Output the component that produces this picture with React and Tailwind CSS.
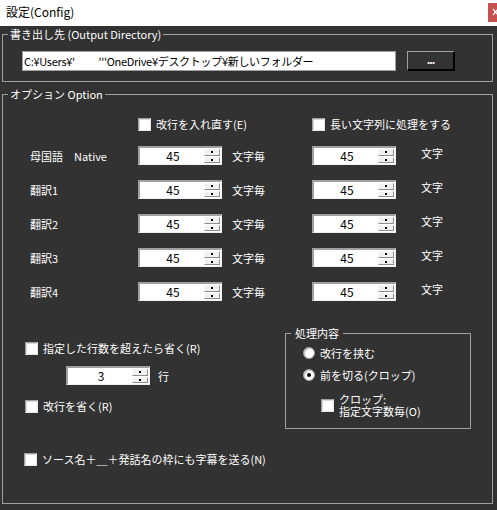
import React from "react";

// 設定ダイアログ（ダーク）
function CheckBox() {
  return (
    <span className="inline-block w-[13px] h-[13px] shrink-0 bg-white border border-[#a0a0a0] border-r-[#e8e8e8] border-b-[#e8e8e8] shadow-[inset_1px_1px_0_#d8d8d8]" />
  );
}

function Radio({ checked }) {
  return (
    <span className="flex items-center justify-center w-[12px] h-[12px] shrink-0 rounded-full bg-white border border-[#a0a0a0] shadow-[inset_1px_1px_0_#c8c8c8]">
      {checked && <span className="w-[4px] h-[4px] rounded-full bg-black" />}
    </span>
  );
}

function SpinBtn() {
  return (
    <div className="flex-1 flex items-center justify-center bg-[#f0f0f0] border border-[#f8f8f8] border-r-[#8c8c8c] border-b-[#8c8c8c]">
      <span className="w-[2px] h-[2px] bg-black" />
    </div>
  );
}

function Spin({ value }) {
  return (
    <div className="flex h-[19px] w-[84px] shrink-0 bg-white border-t-2 border-l-2 border-r border-b border-t-[#a0a0a0] border-l-[#a0a0a0] border-r-[#f0f0f0] border-b-[#f0f0f0]">
      <div className="flex-1 text-center text-black text-[12px] leading-[16px] pl-[2px]">
        {value}
      </div>
      <div className="flex flex-col w-[16px] my-[1px] mr-[1px] gap-[1px]">
        <SpinBtn />
        <SpinBtn />
      </div>
    </div>
  );
}

const rows = ["母国語\u3000Native", "翻訳1", "翻訳2", "翻訳3", "翻訳4"];

export default function App() {
  return (
    <div className="w-[497px] h-[510px] bg-[#323232] text-white text-[11px] leading-[14px] font-['Noto_Sans_CJK_JP','Noto_Sans',sans-serif] flex flex-col overflow-hidden">
      {/* タイトルバー */}
      <div className="h-[26px] bg-white flex items-start justify-between shrink-0">
        <span className="text-black text-[12px] leading-[14px] ml-[6px] mt-[5px]">設定(Config)</span>
        <span className="flex items-center w-[9px] h-[19px] mt-[3px] bg-[#c75050] overflow-hidden">
          <svg width="9" height="19" viewBox="0 0 9 19">
            <path d="M5 6 L10 12 M5 12 L10 6" stroke="white" strokeWidth="1.2" fill="none" />
          </svg>
        </span>
      </div>

      {/* 書き出し先 */}
      <fieldset className="mt-[1px] ml-[2px] mr-[4px] border border-[#a0a0a0] px-0 pb-[10px]">
        <legend className="ml-[5px] px-[2px] leading-[14px]">書き出し先 (Output Directory)</legend>
        <div className="flex items-center mt-[10px]">
          <div className="ml-[19px] w-[374px] h-[20px] bg-white border border-[#a0a0a0] text-black text-[11px] tracking-[-0.3px] leading-[18px] pl-[1px] whitespace-nowrap overflow-hidden">
            C:¥Users¥'　　 '''OneDrive¥デスクトップ¥新しいフォルダー
          </div>
          <button className="ml-[11px] w-[48px] h-[20px] bg-[#333333] border border-t-[#a0a0a0] border-l-[#a0a0a0] border-r-2 border-b-2 border-r-black border-b-black text-white font-bold text-[11px] leading-[12px] pb-[3px] tracking-[-1px]">
            ...
          </button>
        </div>
      </fieldset>

      {/* オプション */}
      <fieldset className="mt-[5px] ml-[2px] mr-[4px] border border-[#a0a0a0] px-0 pb-[37px]">
        <legend className="ml-[5px] px-[2px] leading-[14px]">オプション Option</legend>

        <div className="flex items-center h-[14px] mt-[16px] ml-[135px]">
          <div className="flex items-center gap-[5px] w-[174px]">
            <CheckBox />
            <span>改行を入れ直す(E)</span>
          </div>
          <div className="flex items-center gap-[5px]">
            <CheckBox />
            <span>長い文字列に処理をする</span>
          </div>
        </div>

        <div className="flex flex-col gap-[15px] mt-[15px]">
          {rows.map((label) => (
            <div key={label} className="flex items-center h-[19px]">
              <span className="ml-[27px] w-[108px]">{label}</span>
              <Spin value="45" />
              <span className="ml-[10px] w-[80px]">文字毎</span>
              <Spin value="45" />
              <span className="ml-[25px] mb-[6px]">文字</span>
            </div>
          ))}
        </div>

        <div className="flex mt-[25px]">
          <div className="flex flex-col ml-[22px] w-[260px]">
            <div className="flex items-center gap-[5px] h-[14px] mt-[15px]">
              <CheckBox />
              <span>指定した行数を超えたら省く(R)</span>
            </div>
            <div className="flex items-center mt-[11px] ml-[41px]">
              <Spin value="3" />
              <span className="ml-[8px]">行</span>
            </div>
            <div className="flex items-center gap-[5px] h-[14px] mt-[14px]">
              <CheckBox />
              <span>改行を省く(R)</span>
            </div>
          </div>

          <fieldset className="w-[186px] border border-[#a0a0a0] px-0 pb-[11px]">
            <legend className="ml-[5px] px-[4px] leading-[14px]">処理内容</legend>
            <div className="flex items-center gap-[5px] h-[14px] mt-[6px] ml-[17px]">
              <Radio />
              <span>改行を挟む</span>
            </div>
            <div className="flex items-center gap-[5px] h-[14px] mt-[8px] ml-[17px]">
              <Radio checked />
              <span>前を切る(クロップ)</span>
            </div>
            <div className="flex items-center gap-[5px] mt-[11px] ml-[35px]">
              <CheckBox />
              <span className="leading-[12px]">
                クロップ:
                <br />
                指定文字数毎(O)
              </span>
            </div>
          </fieldset>
        </div>

        <div className="flex items-center gap-[5px] h-[14px] mt-[23px] ml-[21px]">
          <CheckBox />
          <span>ソース名＋＿＋発話名の枠にも字幕を送る(N)</span>
        </div>
      </fieldset>
    </div>
  );
}
